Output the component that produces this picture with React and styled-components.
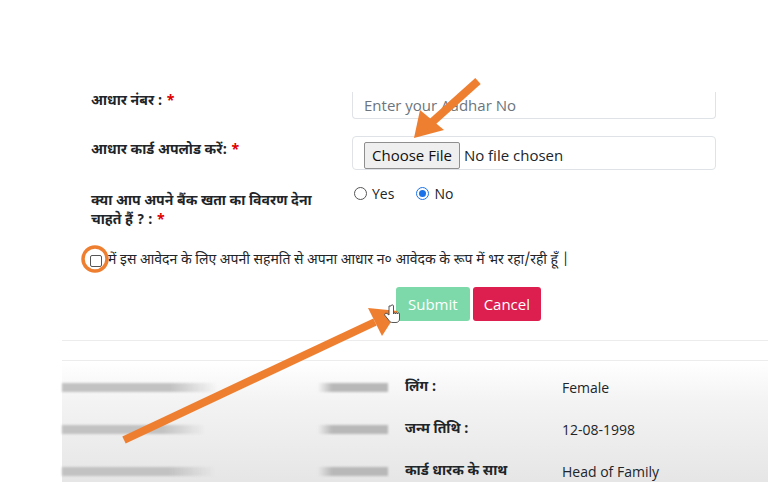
import React from 'react';
import styled, { createGlobalStyle } from 'styled-components';

const GlobalStyle = createGlobalStyle`
  html, body {
    margin: 0;
    padding: 0;
    background: #fff;
  }
  body {
    font-family: "Open Sans", "Noto Sans Devanagari", "Noto Sans", sans-serif;
    color: #212529;
  }
`;

const hindi = `"Noto Sans Devanagari", "Noto Sans", "Open Sans", sans-serif`;

const Page = styled.div`
  position: relative;
  width: 768px;
  height: 482px;
  overflow: hidden;
  background: #fff;
`;

const Form = styled.div`
  padding: 92px 0 0 91px;
  display: flex;
  flex-direction: column;
`;

const Row = styled.div`
  display: grid;
  grid-template-columns: 261px 364px;
  align-items: start;
  margin-bottom: ${p => p.gap || 0}px;
`;

const Label = styled.div`
  font-family: ${hindi};
  font-weight: 700;
  font-size: 14px;
  line-height: 19px;
  color: #212529;
  padding-top: ${p => p.top || 0}px;
`;

const Star = styled.span`
  color: #e00000;
  margin-left: 4px;
`;

const TextInput = styled.div`
  height: 26px;
  border: 1px solid #dfe2e6;
  border-top: none;
  border-radius: 0 0 4px 4px;
  padding-left: 11px;
  display: flex;
  align-items: center;
  font-size: 15px;
  color: #6c757d;
`;

const FileBox = styled.div`
  height: 32px;
  border: 1px solid #dfe2e6;
  border-radius: 4px;
  display: flex;
  align-items: center;
  padding-left: 11px;
  gap: 4px;
  font-size: 15px;
  color: #212529;
`;

const FileButton = styled.div`
  height: 25px;
  padding: 0 7px;
  border: 1px solid #8f8f8f;
  border-radius: 2px;
  background: #efefef;
  display: flex;
  align-items: center;
  margin-top: 4px;
  color: #111;
`;

const FileName = styled.span`
  margin-top: 3px;
`;

const Radios = styled.div`
  display: flex;
  gap: 22px;
  margin-top: -8px;
  padding-left: 2px;
  font-size: 14px;
  line-height: 19px;
`;

const RadioItem = styled.label`
  display: flex;
  align-items: center;
  gap: 5px;
`;

const RadioDot = styled.span`
  width: 11px;
  height: 11px;
  border-radius: 50%;
  border: 1px solid ${p => (p.on ? '#1a73e8' : '#555')};
  background: #fff;
  display: inline-flex;
  align-items: center;
  justify-content: center;
  &::after {
    content: '';
    display: ${p => (p.on ? 'block' : 'none')};
    width: 7px;
    height: 7px;
    border-radius: 50%;
    background: #1a73e8;
  }
`;

const ConsentRow = styled.div`
  display: flex;
  align-items: center;
  gap: 6px;
  margin-left: -1px;
  font-family: ${hindi};
  font-size: 14px;
  line-height: 19px;
  color: #212529;
`;

const CheckBox = styled.span`
  width: 10px;
  height: 10px;
  border: 1px solid #555;
  border-radius: 2px;
  background: #fff;
`;

const Actions = styled.div`
  display: flex;
  gap: 3px;
  margin: 17px 0 0 305px;
`;

const Button = styled.div`
  height: 34px;
  padding: 0 ${p => p.pad}px;
  border-radius: 3px;
  display: flex;
  align-items: center;
  font-size: 15px;
  color: #fff;
  background: ${p => p.bg};
`;

const Divider = styled.div`
  margin: ${p => p.top}px 0 0 62px;
  height: 1px;
  background: #ececec;
`;

const Panel = styled.div`
  margin-left: 62px;
  height: 122px;
  padding-top: 16px;
  background: linear-gradient(to bottom, #ffffff 0%, #f3f3f3 30%, #e3e3e3 100%);
  display: flex;
  flex-direction: column;
  gap: 22px;
`;

const InfoRow = styled.div`
  display: grid;
  grid-template-columns: 256px 87px 157px 1fr;
  align-items: center;
  height: 20px;
`;

const Blur = styled.div`
  width: ${p => p.w}px;
  height: 9px;
  background: linear-gradient(to right, #c2c2c2 70%, rgba(194, 194, 194, 0));
  filter: blur(1.2px);
`;

const BlurRight = styled(Blur)`
  background: linear-gradient(to left, #b8b8b8 80%, rgba(184, 184, 184, 0));
`;

const InfoLabel = styled.div`
  font-family: ${hindi};
  font-weight: 700;
  font-size: 14px;
  color: #212529;
`;

const InfoValue = styled.div`
  font-size: 14px;
  color: #212529;
`;

const Overlay = styled.svg`
  position: absolute;
  left: 0;
  top: 0;
  pointer-events: none;
`;

const info = [
  { label: 'लिंग :', value: 'Female', w: 155 },
  { label: 'जन्म तिथि :', value: '12-08-1998', w: 143 },
  { label: 'कार्ड धारक के साथ', value: 'Head of Family', w: 153 },
];

export default function App() {
  return (
    <>
      <GlobalStyle />
      <Page>
        <Form>
          <Row gap={17}>
            <Label>आधार नंबर :<Star>*</Star></Label>
            <TextInput>Enter your Aadhar No</TextInput>
          </Row>
          <Row gap={22}>
            <Label top={5}>आधार कार्ड अपलोड करें:<Star>*</Star></Label>
            <FileBox>
              <FileButton>Choose File</FileButton>
              <FileName>No file chosen</FileName>
            </FileBox>
          </Row>
          <Row gap={21}>
            <Label>
              क्या आप अपने बैंक खता का विवरण देना
              <br />
              चाहते हैं ? :<Star>*</Star>
            </Label>
            <Radios>
              <RadioItem><RadioDot />Yes</RadioItem>
              <RadioItem><RadioDot on />No</RadioItem>
            </Radios>
          </Row>
          <ConsentRow>
            <CheckBox />
            में इस आवेदन के लिए अपनी सहमति से अपना आधार न० आवेदक के रूप में भर रहा/रही हूँ |
          </ConsentRow>
          <Actions>
            <Button bg="#7dd9a9" pad={12}>Submit</Button>
            <Button bg="#dc1f4f" pad={11}>Cancel</Button>
          </Actions>
        </Form>
        <Divider top={19} />
        <Divider top={19} />
        <Panel>
          {info.map(r => (
            <InfoRow key={r.label}>
              <Blur w={r.w} />
              <BlurRight w={70} />
              <InfoLabel>{r.label}</InfoLabel>
              <InfoValue>{r.value}</InfoValue>
            </InfoRow>
          ))}
        </Panel>
        <Overlay width="768" height="482" viewBox="0 0 768 482">
          <g fill="#ef7f30" stroke="none">
            <line x1="478" y1="81" x2="430" y2="124" stroke="#ef7f30" strokeWidth="8" />
            <polygon points="414,138 420,110 444,130" />
            <line x1="124" y1="440" x2="375" y2="322" stroke="#ef7f30" strokeWidth="8" />
            <polygon points="398,311 368,308 382,336" />
          </g>
          <circle cx="95" cy="259" r="12" fill="none" stroke="#ef7f30" strokeWidth="3.5" />
          <path
            d="M389 306 v9 l-2 -1.5 c-1.5 -1 -3 0.5 -2 2 l4 5 c1 1.5 2 2 4 2 h3 c2 0 3.5 -1.5 3.5 -3.5 v-5 c0 -1.5 -2 -1.5 -2 0 c0 -1.5 -2 -1.5 -2 0 c0 -1.5 -2 -1.5 -2 0 v-8 c0 -1.5 -2.5 -1.5 -2.5 0 z"
            fill="#fff"
            stroke="#444"
            strokeWidth="0.9"
          />
        </Overlay>
      </Page>
    </>
  );
}
